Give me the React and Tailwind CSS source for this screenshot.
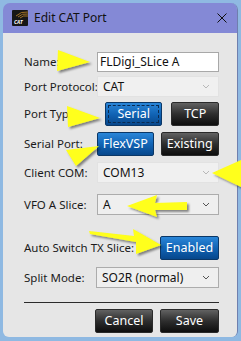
import React from "react";

const font = { fontFamily: '"Noto Sans", "Open Sans", sans-serif' };

function Chevron({ light }) {
  return (
    <svg width="8" height="5" viewBox="0 0 8 5" className="shrink-0">
      <path
        d="M1 1 L4 4 L7 1"
        fill="none"
        stroke={light ? "#b8b8b8" : "#555555"}
        strokeWidth="1"
      />
    </svg>
  );
}

function Select({ value, light, bordered, className = "" }) {
  return (
    <div
      className={
        "flex-1 h-[21px] flex items-center justify-between pl-[5px] pr-[8px] text-[12px] text-[#111] " +
        (bordered ? "bg-[#efefef] border border-[#acacac] " : "bg-[#f0f0f0] border border-[#e2e2e2] ") +
        className
      }
    >
      <span>{value}</span>
      <Chevron light={light} />
    </div>
  );
}

function BlueBtn({ children, focus, className = "" }) {
  return (
    <div
      className={
        "h-[24px] rounded-[2px] border border-[#0b3766] bg-gradient-to-b from-[#2a86d8] via-[#1164b5] to-[#07478c] text-white text-[12.5px] flex items-center justify-center relative " +
        className
      }
    >
      {focus && (
        <div className="absolute inset-[2px] border border-dashed border-[#0a2a50]" />
      )}
      <span className="relative">{children}</span>
    </div>
  );
}

function DarkBtn({ children, className = "" }) {
  return (
    <div
      className={
        "h-[24px] rounded-[2px] border border-[#2a2a2a] bg-gradient-to-b from-[#626262] via-[#2e2e2e] to-[#0e0e0e] text-white text-[12.5px] flex items-center justify-center " +
        className
      }
    >
      {children}
    </div>
  );
}

function Label({ children }) {
  return <div className="w-[73px] shrink-0 text-[11.5px] text-[#1b1b1b] whitespace-nowrap">{children}</div>;
}

export default function App() {
  return (
    <div
      className="w-[241px] h-[341px] bg-[#8fb9e2] pt-[3px] pl-[3px] pr-[3px] pb-[4px] relative overflow-hidden"
      style={font}
    >
      <div className="h-full flex flex-col rounded-t-[7px] rounded-b-[6px] overflow-hidden border-r border-[#6f7fae]">
        {/* title bar */}
        <div className="h-[30px] shrink-0 bg-[#8489d6] flex items-center pl-[9px] pr-[9px]">
          <div className="w-[16px] h-[16px] bg-[#161616] rounded-[1px] relative overflow-hidden">
            <svg width="16" height="16" viewBox="0 0 16 16" className="absolute inset-0">
              <path d="M4 6 Q9 1 16 2" fill="none" stroke="#c58a2a" strokeWidth="0.8" />
              <path d="M6 7 Q10 3 16 4" fill="none" stroke="#c58a2a" strokeWidth="0.8" />
              <path d="M8 8 Q11 5 16 6" fill="none" stroke="#c58a2a" strokeWidth="0.8" />
            </svg>
            <span className="absolute left-[2px] bottom-[1px] text-[5px] leading-none italic font-bold text-white">CAT</span>
          </div>
          <span className="ml-[6px] text-[12px] text-[#111]">Edit CAT Port</span>
          <svg width="10" height="10" viewBox="0 0 10 10" className="ml-auto mr-[1px]">
            <path d="M0.5 0.5 L9.5 9.5 M9.5 0.5 L0.5 9.5" stroke="#111" strokeWidth="1" />
          </svg>
        </div>

        {/* body */}
        <div className="flex-1 bg-[#e6e6e6] pl-[21px] pr-[18px] pt-[19px] flex flex-col">
          <div className="flex items-center h-[20px]">
            <Label>Name:</Label>
            <div className="flex-1 h-[20px] bg-white border border-[#a8a8a8] flex items-center pl-[2px] text-[12px] text-[#111]">
              FLDigi_SLice A
            </div>
          </div>

          <div className="flex items-center mt-[4px]">
            <Label>Port Protocol:</Label>
            <Select value="CAT" light />
          </div>

          <div className="flex items-center mt-[5px]">
            <Label>Port Type:</Label>
            <BlueBtn focus className="w-[58px] ml-[8px]">Serial</BlueBtn>
            <DarkBtn className="w-[48px] ml-[9px]">TCP</DarkBtn>
          </div>

          <div className="flex items-center mt-[6px]">
            <Label>Serial Port:</Label>
            <BlueBtn className="w-[57px]">FlexVSP</BlueBtn>
            <DarkBtn className="w-[59px] ml-[7px]">Existing</DarkBtn>
          </div>

          <div className="flex items-center mt-[6px]">
            <Label>Client COM:</Label>
            <Select value="COM13" light />
          </div>

          <div className="flex items-center mt-[11px]">
            <Label>VFO A Slice:</Label>
            <Select value="A" bordered />
          </div>

          <div className="flex items-center mt-[21px]">
            <div className="flex-1 text-[11.5px] text-[#1b1b1b] whitespace-nowrap">Auto Switch TX Slice:</div>
            <BlueBtn className="w-[59px]">Enabled</BlueBtn>
          </div>

          <div className="flex items-center mt-[7px]">
            <div className="w-[72px] shrink-0 text-[11.5px] text-[#1b1b1b]">Split Mode:</div>
            <Select value="SO2R (normal)" bordered />
          </div>

          <div className="mt-[14px] h-px bg-[#2b2b2b]" />

          <div className="flex justify-end mt-[6px]">
            <DarkBtn className="w-[58px] h-[23px]">Cancel</DarkBtn>
            <DarkBtn className="w-[59px] h-[23px] ml-[7px]">Save</DarkBtn>
          </div>
        </div>
      </div>

      {/* yellow annotation arrows */}
      <svg
        width="241"
        height="341"
        viewBox="0 0 241 341"
        className="absolute inset-0 pointer-events-none"
      >
        <defs>
          <filter id="sh" x="-20%" y="-20%" width="140%" height="140%">
            <feDropShadow dx="2" dy="2" stdDeviation="1.2" floodColor="#000" floodOpacity="0.45" />
          </filter>
        </defs>
        <g fill="#ffff1a" filter="url(#sh)">
          <polygon points="58,50 57,71 90,62" />
          <polygon points="67,106 68,127 100,118" />
          <polygon points="66,150 76,166 99,146" />
          <polygon points="212,173 241,160 241,187" />
          <polygon points="127,206 157,195 155,203 187,202 187,210 155,210 157,217" />
          <polygon points="89,231 134,236 133,229 161,245 136,254 136,242 90,234" />
        </g>
      </svg>
    </div>
  );
}
